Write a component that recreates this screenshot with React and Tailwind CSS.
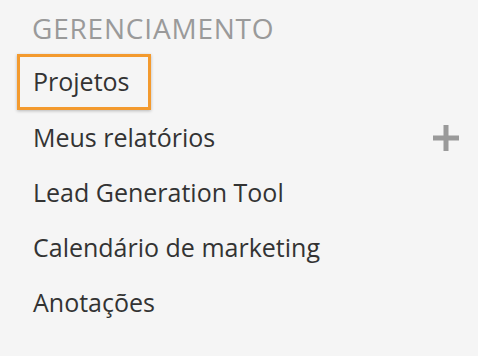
import React from 'react';

const items = [
  { label: 'Projetos', active: true },
  { label: 'Meus relatórios', add: true },
  { label: 'Lead Generation Tool' },
  { label: 'Calendário de marketing' },
  { label: 'Anotações' },
];

const PlusIcon = () => (
  <svg width="26" height="26" viewBox="0 0 26 26" className="text-[#9a9a9a]">
    <rect x="10.5" y="0" width="5" height="26" fill="currentColor" />
    <rect x="0" y="10.5" width="26" height="5" fill="currentColor" />
  </svg>
);

export default function App() {
  return (
    <div
      className="w-full h-[356px] bg-[#f5f5f5] text-[#333333] overflow-hidden"
      style={{ fontFamily: '"Open Sans", "DejaVu Sans", sans-serif' }}
    >
      {/* Section title */}
      <div className="h-[55px] flex items-center pl-[32px] text-[28px] font-medium tracking-[0.8px] text-[#9a9a9a]">
        GERENCIAMENTO
      </div>

      <ul>
        {items.map(item => (
          <li key={item.label} className="h-[55px] flex items-center pl-[17px] pr-[19px]">
            {item.active ? (
              <div className="h-[56px] -mt-px flex items-center pl-[13px] pr-[18px] border-[3px] border-[#f39a2e] shadow-[0_1px_3px_rgba(0,0,0,0.25)]">
                <span className="text-[25px]">{item.label}</span>
              </div>
            ) : (
              <span className="pl-[16px] text-[25px]">{item.label}</span>
            )}
            {item.add && (
              <span className="ml-auto flex">
                <PlusIcon />
              </span>
            )}
          </li>
        ))}
      </ul>
    </div>
  );
}
